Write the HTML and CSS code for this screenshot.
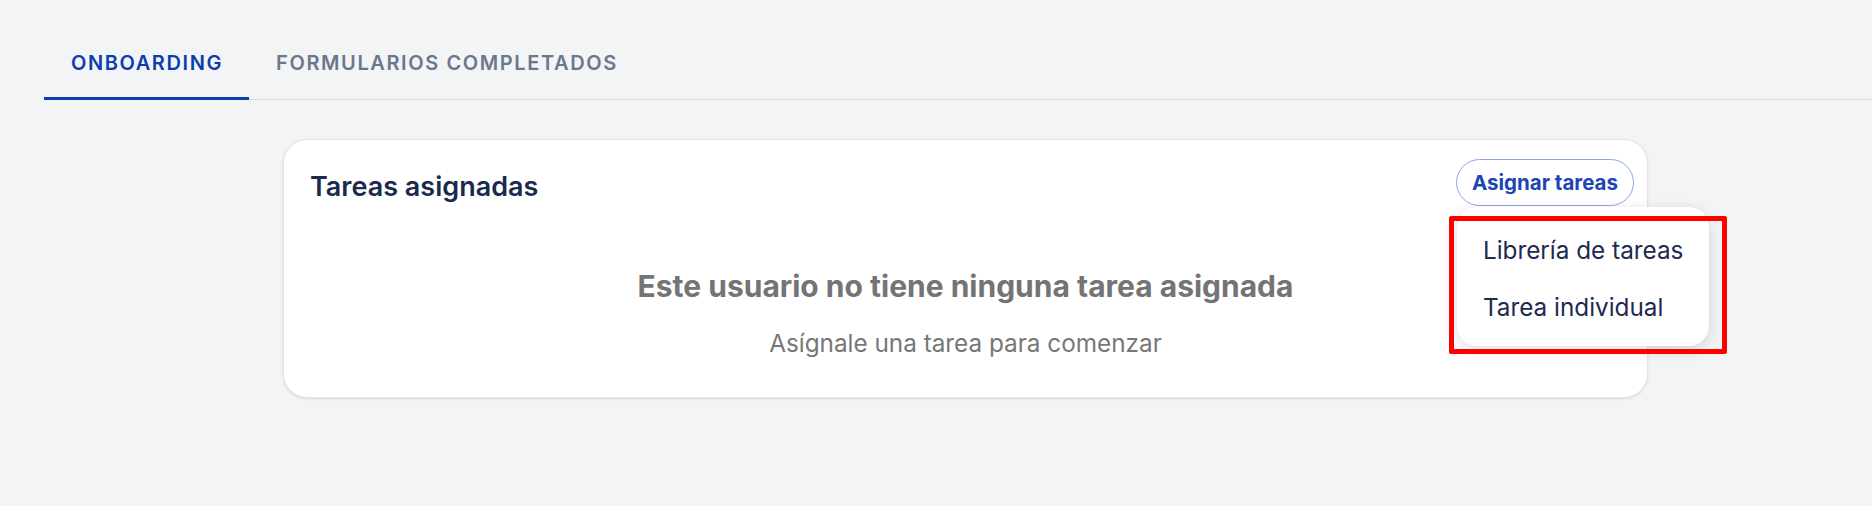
FILE: index.html
```html
<!DOCTYPE html>
<html lang="es">
<head>
<meta charset="utf-8">
<title>Onboarding</title>
<link rel="stylesheet" href="styles.css">
</head>
<body>
  <nav class="tabs">
    <div class="tab tab-active">ONBOARDING</div>
    <div class="tab">FORMULARIOS COMPLETADOS</div>
  </nav>
  <main class="content">
    <section class="card">
      <header class="card-header">
        <h2 class="card-title">Tareas asignadas</h2>
        <div class="assign">
          <button class="assign-btn">Asignar tareas</button>
          <div class="menu">
            <div class="menu-item">Librería de tareas</div>
            <div class="menu-item">Tarea individual</div>
          </div>
          <div class="highlight"></div>
        </div>
      </header>
      <div class="empty">
        <p class="empty-title">Este usuario no tiene ninguna tarea asignada</p>
        <p class="empty-sub">Asígnale una tarea para comenzar</p>
      </div>
    </section>
  </main>
</body>
</html>
```
FILE: styles.css
```css
* { box-sizing: border-box; }
html, body { margin: 0; padding: 0; }
body {
  background: #f3f4f6;
  font-family: Inter, "Noto Sans", sans-serif;
  width: 1872px;
  height: 506px;
  overflow: hidden;
}
.tabs {
  display: flex;
  margin-left: 44px;
  padding-top: 49px;
  border-bottom: 1px solid #d7d9de;
}
.tab {
  font-size: 20px;
  line-height: 28px;
  font-weight: 600;
  letter-spacing: 1.6px;
  color: #6b778d;
  padding: 0 26px 20px 27px;
  border-bottom: 3px solid transparent;
  margin-bottom: -1px;
}
.tab-active {
  color: #0c3daf;
  border-bottom-color: #0c3daf;
}
.content {
  padding: 39px 0 0 283px;
}
.card {
  width: 1365px;
  background: #fff;
  border: 1px solid #e2e4e8;
  border-radius: 24px;
  box-shadow: 0 1px 3px rgba(0, 0, 0, 0.1);
}
.card-header {
  display: flex;
  justify-content: space-between;
  align-items: flex-start;
  padding: 19px 13px 0 26px;
}
.card-title {
  margin: 12px 0 0;
  font-size: 27px;
  line-height: 32px;
  font-weight: 600;
  color: #1a2a4d;
}
.assign { position: relative; }
.assign-btn {
  display: block;
  height: 47px;
  padding: 0 15px;
  border: 1px solid #8ea5e4;
  border-radius: 24px;
  background: #fff;
  font-family: inherit;
  font-size: 20.5px;
  font-weight: 700;
  color: #1c46b3;
}
.menu {
  position: absolute;
  left: 1px;
  top: 48px;
  width: 252px;
  padding: 15px 0 10px;
  background: #fff;
  border-radius: 20px;
  box-shadow: 0 4px 16px rgba(0, 0, 0, 0.13), 0 0 1px rgba(0, 0, 0, 0.08);
  z-index: 2;
}
.menu-item {
  padding: 0 26px;
  font-size: 24.3px;
  line-height: 57px;
  color: #1c2b4f;
  white-space: nowrap;
}
.highlight {
  position: absolute;
  left: -7px;
  top: 57px;
  width: 278px;
  height: 138px;
  border: 5px solid #ff0000;
  border-radius: 2px;
  z-index: 3;
  pointer-events: none;
}
.empty {
  text-align: center;
  padding: 62px 0 38px;
}
.empty-title {
  margin: 0;
  font-size: 30px;
  line-height: 36px;
  font-weight: 700;
  color: #747474;
}
.empty-sub {
  margin: 23px 0 0;
  font-size: 24.3px;
  line-height: 32px;
  font-weight: 400;
  color: #777;
}
```
